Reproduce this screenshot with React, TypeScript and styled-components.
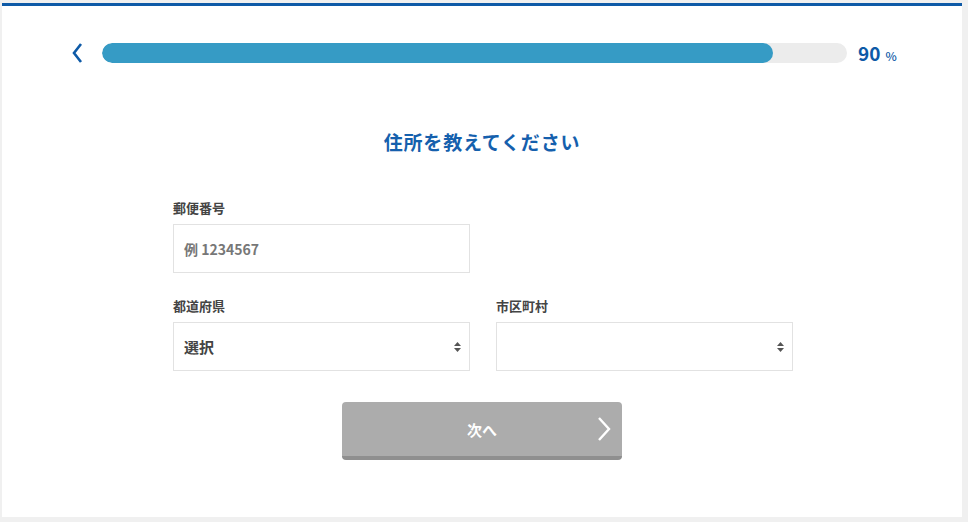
import React from 'react';
import styled, { createGlobalStyle } from 'styled-components';

const Global = createGlobalStyle`
  html, body { margin: 0; background: #f0f0f0; }
  body { font-family: "Noto Sans CJK JP", "Noto Sans", sans-serif; }
`;

const Card = styled.div`
  width: 960px;
  height: 514px;
  margin-left: 2px;
  margin-top: 3px;
  background: #fff;
  border-top: 3px solid #0e5aa7;
  box-sizing: border-box;
  display: flex;
  flex-direction: column;
  align-items: center;
`;

const ProgressRow = styled.div`
  display: flex;
  align-items: center;
  width: 100%;
  margin-top: 33px;
  padding-left: 68px;
  box-sizing: border-box;
`;

const Back = styled.button`
  border: none;
  background: none;
  padding: 0;
  width: 20px;
  height: 20px;
  margin-right: 12px;
  display: flex;
  align-items: center;
  cursor: pointer;
`;

const Track = styled.div`
  width: 745px;
  height: 20px;
  border-radius: 10px;
  background: #ececec;
  overflow: hidden;
`;

const Fill = styled.div`
  height: 100%;
  border-radius: 10px;
  background: #369bc5;
`;

const Percent = styled.div`
  margin-left: 11px;
  color: #0e5aa7;
  font-weight: 700;
  font-size: 19px;
  span { font-size: 12px; font-weight: 500; margin-left: 5px; }
`;

const Title = styled.h1`
  margin: 62px 0 0;
  font-size: 19px;
  letter-spacing: 0.8px;
  font-weight: 700;
  color: #1560ad;
`;

const Form = styled.div`
  width: 620px;
  margin-top: 43px;
  margin-left: 2px;
  display: grid;
  grid-template-columns: 297px 297px;
  column-gap: 26px;
`;

const Field = styled.div`
  display: flex;
  flex-direction: column;
  margin-bottom: 23px;
`;

const Label = styled.label`
  font-size: 13px;
  font-weight: 700;
  color: #444;
  height: 17px;
  margin-bottom: 9px;
`;

const Box = styled.div`
  height: 49px;
  border: 1px solid #e2e2e2;
  box-sizing: border-box;
  display: flex;
  align-items: center;
  justify-content: space-between;
  padding: 0 10px;
  font-size: 14px;
`;

const Placeholder = styled.span`
  color: #777;
  font-weight: 600;
`;

const Value = styled.span`
  color: #444;
  font-weight: 700;
  font-size: 15px;
`;

const Arrows = styled.span`
  display: flex;
  flex-direction: column;
  gap: 2px;
  margin-right: -2px;
`;

const Button = styled.button`
  margin-top: 8px;
  width: 280px;
  height: 58px;
  border: none;
  border-radius: 4px;
  border-bottom: 4px solid #8f8f8f;
  background: #acacac;
  color: #fff;
  font-family: inherit;
  font-size: 15px;
  font-weight: 700;
  position: relative;
`;

const Chevron = styled.svg`
  position: absolute;
  right: 10px;
  top: 14px;
`;

const SelectArrows = () => (
  <Arrows>
    <svg width="7" height="4"><path d="M0 4L3.5 0L7 4Z" fill="#555" /></svg>
    <svg width="7" height="4"><path d="M0 0L3.5 4L7 0Z" fill="#555" /></svg>
  </Arrows>
);

export default function App() {
  const progress = 90;
  return (
    <>
      <Global />
      <Card>
        <ProgressRow>
          <Back>
            <svg width="14" height="20" viewBox="0 0 14 20">
              <path d="M11 1L4 10L11 19" fill="none" stroke="#0e5aa7" strokeWidth="2.6" />
            </svg>
          </Back>
          <Track>
            <Fill style={{ width: `${progress}%` }} />
          </Track>
          <Percent>
            {progress}
            <span>%</span>
          </Percent>
        </ProgressRow>
        <Title>住所を教えてください</Title>
        <Form>
          <Field>
            <Label>郵便番号</Label>
            <Box>
              <Placeholder>例 1234567</Placeholder>
            </Box>
          </Field>
          <div />
          <Field>
            <Label>都道府県</Label>
            <Box>
              <Value>選択</Value>
              <SelectArrows />
            </Box>
          </Field>
          <Field>
            <Label>市区町村</Label>
            <Box>
              <span />
              <SelectArrows />
            </Box>
          </Field>
        </Form>
        <Button>
          次へ
          <Chevron width="16" height="26" viewBox="0 0 16 26">
            <path d="M3 2L13 13L3 24" fill="none" stroke="#fff" strokeWidth="2.4" />
          </Chevron>
        </Button>
      </Card>
    </>
  );
}
